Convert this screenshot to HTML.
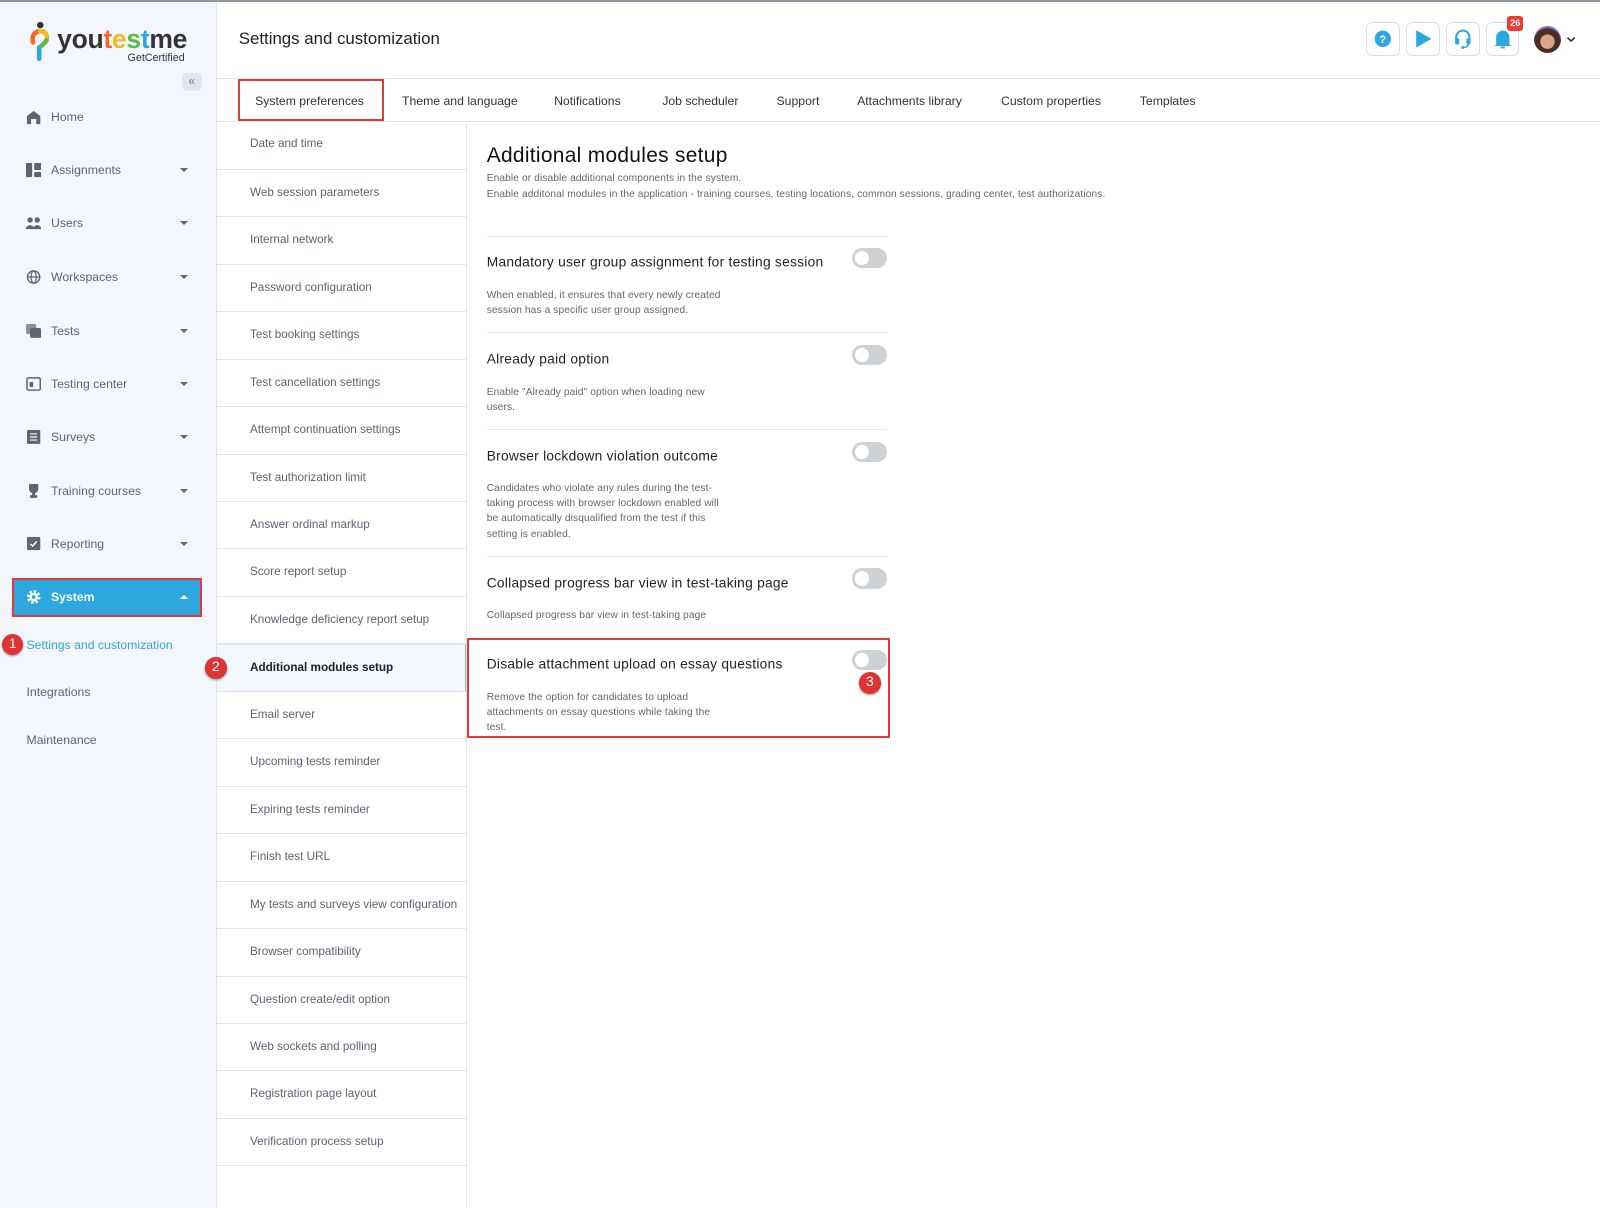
<!DOCTYPE html>
<html><head><meta charset="utf-8">
<style>
*{margin:0;padding:0;box-sizing:border-box}
html,body{width:1600px;height:1208px;overflow:hidden;background:#fff}
#w{zoom:1.0204;width:1568px;height:1184px;position:relative;font-family:"Liberation Sans",Arial,sans-serif;color:#222}
.a{position:absolute;white-space:nowrap}
#top{position:absolute;left:0;top:0;width:1568px;height:2px;background:#8d9aa5}
#side{position:absolute;left:0;top:2px;width:213px;height:1182px;background:#f3f6fc;border-right:1px solid #e1e5eb}
.nav{position:absolute;left:50px;font-size:12px;color:#5d6572;transform:translateY(-50%)}
.ico{position:absolute;left:25px;width:15px;height:14px;transform:translateY(-50%);}
.car{position:absolute;left:176px;width:0;height:0;border-left:4px solid transparent;border-right:4px solid transparent;border-top:4px solid #5d6572;transform:translateY(-50%)}
.tab{position:absolute;top:99px;font-size:12px;color:#333;transform:translateY(-50%)}
.sub{position:absolute;left:213px;width:244px;height:46.5px;border-bottom:1px solid #e1e5eb;font-size:11.5px;color:#5d6572;padding-left:32px;line-height:46px}
.btn{position:absolute;top:22px;width:33px;height:33px;border:1px solid #d7dee6;border-radius:6px;background:#fff}
.h{position:absolute;left:477px;font-size:13.5px;color:#222;letter-spacing:.25px;transform:translateY(-50%)}
.d{position:absolute;left:477px;font-size:10px;color:#666;line-height:15px;letter-spacing:.1px}
.ln{position:absolute;left:477px;width:392px;height:1px;background:#e3e7ec}
.tg{position:absolute;left:835px;width:34px;height:20px;border-radius:10px;background:#cfd2d5}
.tg:after{content:"";position:absolute;left:3px;top:3px;width:14px;height:14px;border-radius:50%;background:#fff}
.bd{position:absolute;width:21px;height:21px;border-radius:50%;background:#e03434;color:#fff;font-size:14px;text-align:center;line-height:21px;box-shadow:0 1px 2px rgba(0,0,0,.4)}
</style></head><body><div id="w">
<div id="top"></div>
<div id="side"></div>
<!-- logo -->
<svg class="a" style="left:27px;top:20px" width="24" height="42" viewBox="0 0 24 42">
<circle cx="12" cy="5" r="3.2" fill="#333"/>
<path d="M5 22 C3 14 8 11 12 11" stroke="#ef6b2c" stroke-width="4.5" fill="none" stroke-linecap="round"/>
<path d="M12 11 C17 11 20 15 18 20" stroke="#f5b921" stroke-width="4.5" fill="none" stroke-linecap="round"/>
<path d="M18 20 C16 24 13 25 11 27" stroke="#5cba47" stroke-width="4.5" fill="none" stroke-linecap="round"/>
<path d="M11 27 L11 38" stroke="#2ca8df" stroke-width="4.5" fill="none" stroke-linecap="round"/>
</svg>
<div class="a" style="left:56px;top:24px;font-size:26px;font-weight:bold;color:#333;letter-spacing:-.3px">you<span style="color:#ef6b2c">t</span><span style="color:#f5b921">e</span><span style="color:#5cba47">s</span><span style="color:#2ca8df">t</span>me</div>
<div class="a" style="left:125px;top:51px;font-size:10.5px;color:#333">GetCertified</div>
<div class="a" style="left:178px;top:72px;width:20px;height:17px;border-radius:5px;background:#e3e6ea;color:#777;font-size:12px;text-align:center;line-height:16px">«</div>
<!-- nav -->
<svg class="ico" style="top:115px" viewBox="0 0 15 14"><path d="M1 14V6L7.5 1 14 6V14H10V9H5V14Z" fill="#5d6572"/></svg>
<div class="nav" style="top:115px">Home</div>
<svg class="ico" style="top:167px" viewBox="0 0 15 14"><rect x="0" y="0" width="6" height="14" rx="1" fill="#5d6572"/><rect x="8" y="0" width="7" height="7" rx="1" fill="#5d6572"/><rect x="8" y="9" width="7" height="5" rx="1" fill="#5d6572"/></svg>
<div class="nav" style="top:167px">Assignments</div><div class="car" style="top:167px"></div>
<svg class="ico" style="top:219px" viewBox="0 0 15 14"><circle cx="4" cy="4" r="2.6" fill="#5d6572"/><circle cx="11" cy="4" r="2.6" fill="#5d6572"/><path d="M0 13C0 8 8 8 8 13Z M7 13C7 8 15 8 15 13Z" fill="#5d6572"/></svg>
<div class="nav" style="top:219px">Users</div><div class="car" style="top:219px"></div>
<svg class="ico" style="top:271px" viewBox="0 0 15 14"><circle cx="7.5" cy="7" r="6" fill="none" stroke="#5d6572" stroke-width="1.4"/><ellipse cx="7.5" cy="7" rx="2.5" ry="6" fill="none" stroke="#5d6572" stroke-width="1.2"/><path d="M1.5 7H13.5" stroke="#5d6572" stroke-width="1.2"/></svg>
<div class="nav" style="top:271px">Workspaces</div><div class="car" style="top:271px"></div>
<svg class="ico" style="top:324px" viewBox="0 0 15 14"><rect x="0" y="0" width="10" height="10" rx="2" fill="#8a919c"/><rect x="4" y="4" width="11" height="10" rx="2" fill="#5d6572"/></svg>
<div class="nav" style="top:324px">Tests</div><div class="car" style="top:324px"></div>
<svg class="ico" style="top:376px" viewBox="0 0 15 14"><rect x="1" y="1" width="13" height="12" rx="1.5" fill="none" stroke="#5d6572" stroke-width="1.5"/><rect x="3.5" y="5" width="3.5" height="5" fill="#5d6572"/></svg>
<div class="nav" style="top:376px">Testing center</div><div class="car" style="top:376px"></div>
<svg class="ico" style="top:428px" viewBox="0 0 15 14"><rect x="1" y="0" width="13" height="14" rx="1.5" fill="#5d6572"/><path d="M4 4H11M4 7H11M4 10H11" stroke="#fff" stroke-width="1.2"/></svg>
<div class="nav" style="top:428px">Surveys</div><div class="car" style="top:428px"></div>
<svg class="ico" style="top:481px" viewBox="0 0 15 14"><path d="M3 0H12V5C12 8 9.5 9 7.5 9S3 8 3 5Z M6 9H9V11H11V14H4V11H6Z" fill="#5d6572"/></svg>
<div class="nav" style="top:481px">Training courses</div><div class="car" style="top:481px"></div>
<svg class="ico" style="top:533px" viewBox="0 0 15 14"><rect x="1" y="0" width="13" height="13" rx="1.5" fill="#5d6572"/><path d="M4.5 7L6.5 9L10.5 4.5" stroke="#fff" stroke-width="1.4" fill="none"/></svg>
<div class="nav" style="top:533px">Reporting</div><div class="car" style="top:533px"></div>
<div class="a" style="left:12px;top:566px;width:186px;height:39px;background:#2ca8df;border:2px solid #e53935"></div>
<svg class="ico" style="top:585px" viewBox="0 0 15 14"><circle cx="7.5" cy="7" r="5" fill="none" stroke="#fff" stroke-width="3.5" stroke-dasharray="2.2 1.7"/><circle cx="7.5" cy="7" r="4.2" fill="#fff"/><circle cx="7.5" cy="7" r="1.8" fill="#2ca8df"/></svg>
<div class="nav" style="top:585px;color:#fff;font-weight:bold">System</div>
<div class="a" style="left:176px;top:583px;border-left:4px solid transparent;border-right:4px solid transparent;border-bottom:4px solid #fff"></div>
<div class="nav" style="left:26px;top:632px;color:#2ca8df">Settings and customization</div>
<div class="nav" style="left:26px;top:678px">Integrations</div>
<div class="nav" style="left:26px;top:725px">Maintenance</div>
<div class="bd" style="left:2px;top:621px">1</div>
<!-- header -->
<div class="a" style="left:234px;top:28px;font-size:16.5px;color:#222">Settings and customization</div>
<div class="a" style="left:213px;top:76px;width:1355px;height:1px;background:#e1e5eb"></div>
<div class="a" style="left:213px;top:119px;width:1355px;height:1px;background:#e1e5eb"></div>
<div class="btn" style="left:1339px"><svg width="31" height="31" viewBox="0 0 31 31"><circle cx="15.5" cy="15.5" r="8" fill="#2ca8df"/><text x="15.5" y="19.5" fill="#fff" font-size="11" font-weight="bold" text-anchor="middle" font-family="Liberation Sans">?</text></svg></div>
<div class="btn" style="left:1378px"><svg width="31" height="31" viewBox="0 0 31 31"><path d="M9 7L24 15.5L9 24Z" fill="#2ca8df"/></svg></div>
<div class="btn" style="left:1417px"><svg width="31" height="31" viewBox="0 0 31 31"><path d="M9 17V14A6.5 6.5 0 0 1 22 14V17" stroke="#2ca8df" stroke-width="2" fill="none"/><rect x="8" y="15" width="4" height="6" rx="1" fill="#2ca8df"/><rect x="19" y="15" width="4" height="6" rx="1" fill="#2ca8df"/><path d="M21 21Q20 24 16 24" stroke="#2ca8df" stroke-width="1.5" fill="none"/><circle cx="15.5" cy="24" r="1.5" fill="#2ca8df"/></svg></div>
<div class="btn" style="left:1456px"><svg width="31" height="31" viewBox="0 0 31 31"><path d="M9 21V14A6.5 6.5 0 0 1 22 14V21L23.5 22.5H7.5Z" fill="#2ca8df"/><path d="M13.5 24H17.5" stroke="#2ca8df" stroke-width="2"/></svg></div>
<div class="a" style="left:1477px;top:16px;width:16px;height:14px;background:#f03a36;border-radius:3px;color:#fff;font-size:9px;font-weight:bold;text-align:center;line-height:14px">26</div>
<div class="a" style="left:1503px;top:25px;width:27px;height:27px;border-radius:50%;background:radial-gradient(circle at 50% 58%,#d9a58a 0 34%,#4a2e22 36% 64%,#8a6bc8 66%)"></div>
<svg class="a" style="left:1535px;top:35px" width="10" height="7" viewBox="0 0 10 7"><path d="M1.5 1.5L5 5L8.5 1.5" stroke="#333" stroke-width="1.6" fill="none"/></svg>
<!-- tabs -->
<div class="a" style="left:233px;top:77px;width:143px;height:42px;border:2px solid #e53935"></div>
<div class="tab" style="left:250px">System preferences</div>
<div class="tab" style="left:394px">Theme and language</div>
<div class="tab" style="left:543px">Notifications</div>
<div class="tab" style="left:649px">Job scheduler</div>
<div class="tab" style="left:761px">Support</div>
<div class="tab" style="left:840px">Attachments library</div>
<div class="tab" style="left:981px">Custom properties</div>
<div class="tab" style="left:1117px">Templates</div>
<!-- submenu -->
<div class="a" style="left:457px;top:120px;width:1px;height:1064px;background:#e1e5eb"></div>
<div class="sub" style="top:120px;line-height:44px">Date and time</div>
<div class="sub" style="top:166.5px">Web session parameters</div>
<div class="sub" style="top:213px">Internal network</div>
<div class="sub" style="top:259.5px">Password configuration</div>
<div class="sub" style="top:306px">Test booking settings</div>
<div class="sub" style="top:352.5px">Test cancellation settings</div>
<div class="sub" style="top:399px">Attempt continuation settings</div>
<div class="sub" style="top:445.5px">Test authorization limit</div>
<div class="sub" style="top:492px">Answer ordinal markup</div>
<div class="sub" style="top:538.5px">Score report setup</div>
<div class="sub" style="top:585px">Knowledge deficiency report setup</div>
<div class="sub" style="top:631.5px;background:#f3f6fc;color:#222;font-weight:bold;border-right:1px solid #7ec5e8;border-top:1px solid #e1e5eb">Additional modules setup</div>
<div class="sub" style="top:678px">Email server</div>
<div class="sub" style="top:724.5px">Upcoming tests reminder</div>
<div class="sub" style="top:771px">Expiring tests reminder</div>
<div class="sub" style="top:817.5px">Finish test URL</div>
<div class="sub" style="top:864px">My tests and surveys view configuration</div>
<div class="sub" style="top:910.5px">Browser compatibility</div>
<div class="sub" style="top:957px">Question create/edit option</div>
<div class="sub" style="top:1003.5px">Web sockets and polling</div>
<div class="sub" style="top:1050px">Registration page layout</div>
<div class="sub" style="top:1096.5px">Verification process setup</div>
<div class="bd" style="left:201px;top:644px">2</div>
<!-- content -->
<div class="a" style="left:477px;top:141px;font-size:20.5px;color:#111;letter-spacing:.3px">Additional modules setup</div>
<div class="d" style="top:168px">Enable or disable additional components in the system.<br>Enable additonal modules in the application - training courses, testing locations, common sessions, grading center, test authorizations.</div>
<div class="ln" style="top:231px"></div>
<div class="h" style="top:257px">Mandatory user group assignment for testing session</div>
<div class="tg" style="top:243px"></div>
<div class="d" style="top:282px">When enabled, it ensures that every newly created<br>session has a specific user group assigned.</div>
<div class="ln" style="top:325px"></div>
<div class="h" style="top:352px">Already paid option</div>
<div class="tg" style="top:338px"></div>
<div class="d" style="top:377px">Enable "Already paid" option when loading new<br>users.</div>
<div class="ln" style="top:420px"></div>
<div class="h" style="top:447px">Browser lockdown violation outcome</div>
<div class="tg" style="top:433px"></div>
<div class="d" style="top:471px">Candidates who violate any rules during the test-<br>taking process with browser lockdown enabled will<br>be automatically disqualified from the test if this<br>setting is enabled.</div>
<div class="ln" style="top:545px"></div>
<div class="h" style="top:571px">Collapsed progress bar view in test-taking page</div>
<div class="tg" style="top:557px"></div>
<div class="d" style="top:596px">Collapsed progress bar view in test-taking page</div>
<div class="a" style="left:458px;top:625px;width:414px;height:98px;border:2px solid #e53935"></div>
<div class="h" style="top:651px">Disable attachment upload on essay questions</div>
<div class="tg" style="top:637px"></div>
<div class="d" style="top:676px">Remove the option for candidates to upload<br>attachments on essay questions while taking the<br>test.</div>
<div class="bd" style="left:842px;top:659px">3</div>
</div></body></html>
